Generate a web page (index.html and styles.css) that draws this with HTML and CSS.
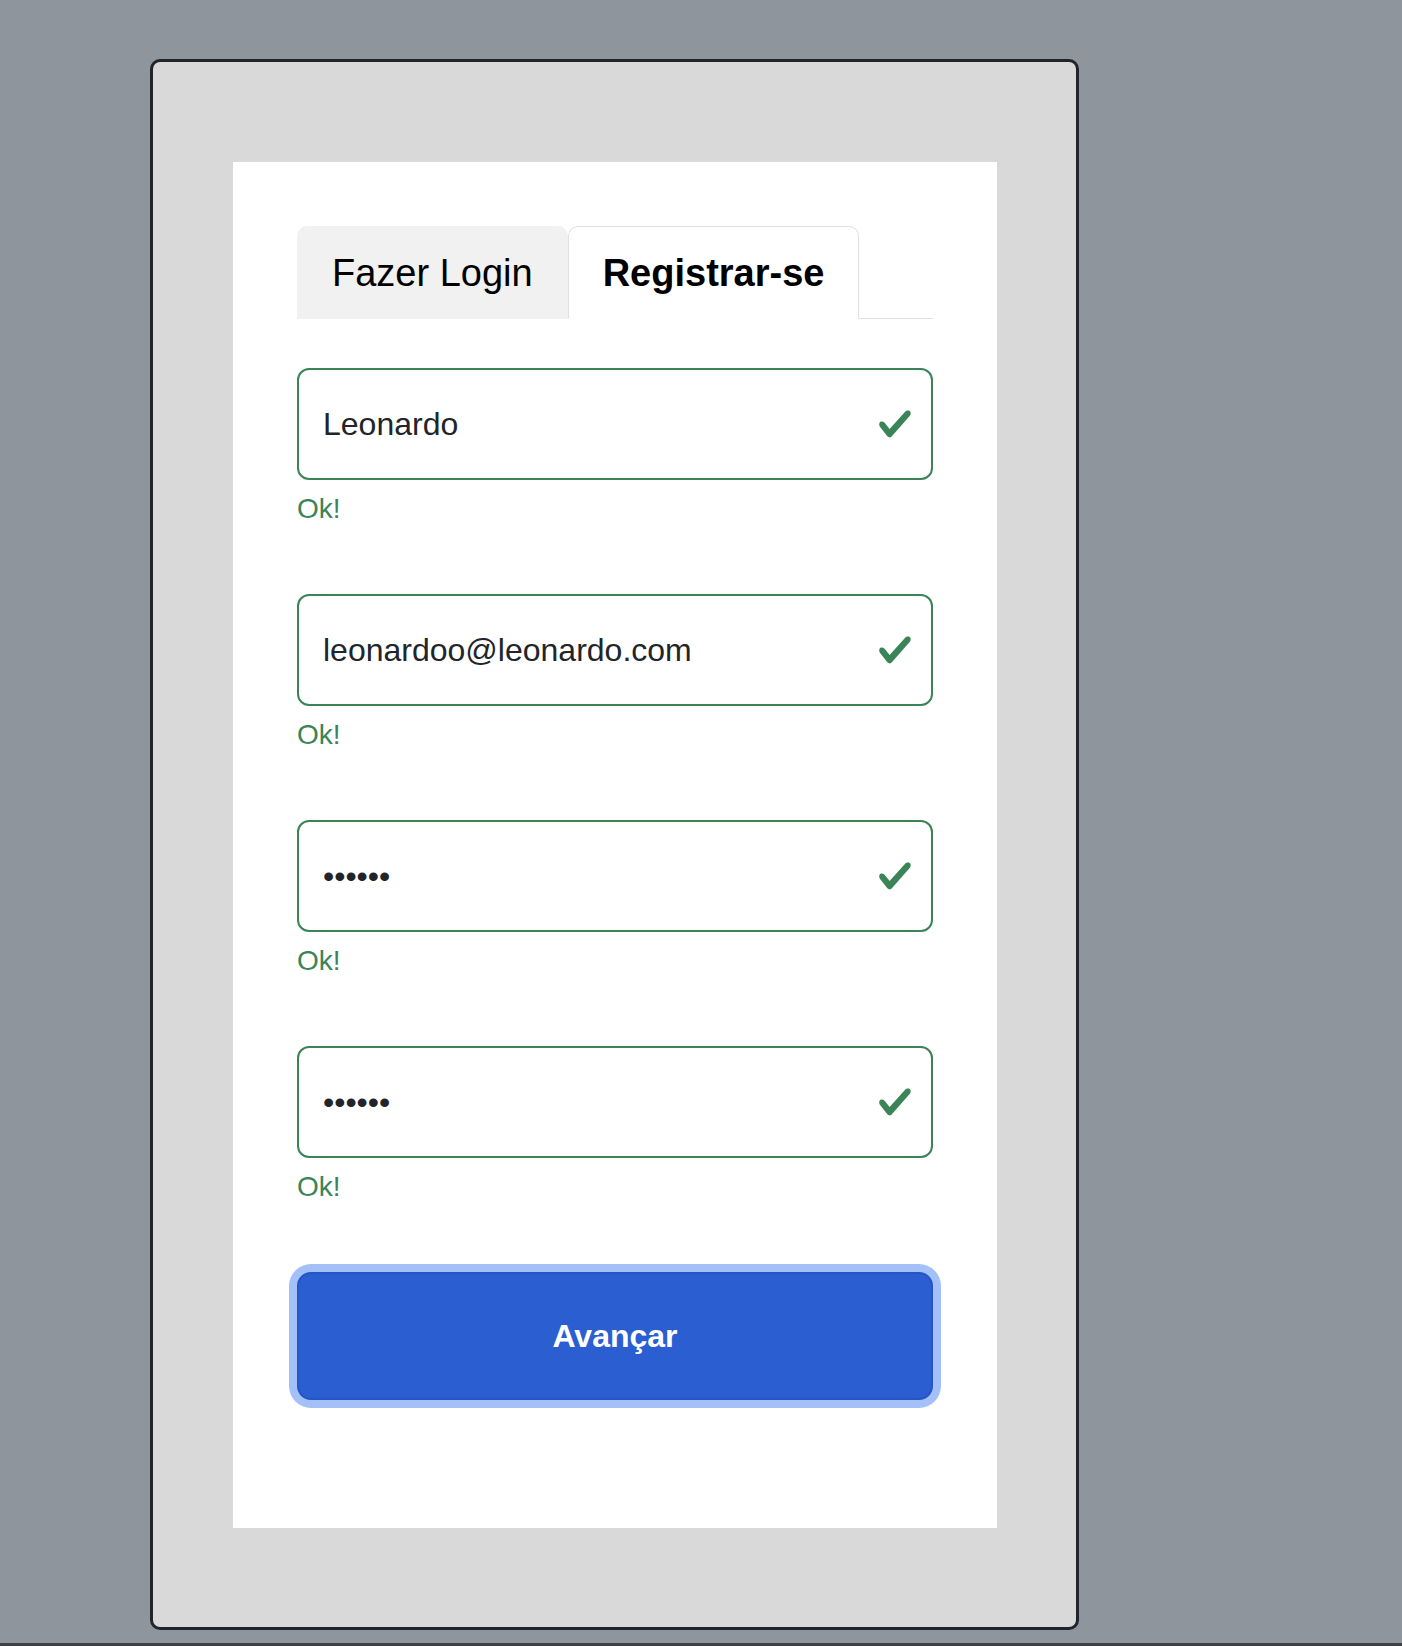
FILE: index.html
```html
<!DOCTYPE html>
<html lang="pt-BR">
<head>
<meta charset="utf-8">
<title>Registrar-se</title>
<link rel="stylesheet" href="styles.css">
</head>
<body>
  <div class="device">
    <div class="panel">
      <div class="tabs">
        <button class="tab" type="button">Fazer Login</button>
        <button class="tab active" type="button">Registrar-se</button>
      </div>
      <form class="form">
        <div class="group">
          <div class="field">
            <input class="control" type="text" value="Leonardo">
            <svg class="valid-icon" viewBox="0 0 8 8" aria-hidden="true"><path d="M2.3 6.73.6 4.53c-.4-1.04.46-1.4 1.1-.8l1.1 1.4 3.4-3.8c.6-.63 1.6-.27 1.2.7l-4 4.6c-.43.5-.8.4-1.1.1z"/></svg>
          </div>
          <div class="feedback">Ok!</div>
        </div>
        <div class="group">
          <div class="field">
            <input class="control" type="email" value="leonardoo@leonardo.com">
            <svg class="valid-icon" viewBox="0 0 8 8" aria-hidden="true"><path d="M2.3 6.73.6 4.53c-.4-1.04.46-1.4 1.1-.8l1.1 1.4 3.4-3.8c.6-.63 1.6-.27 1.2.7l-4 4.6c-.43.5-.8.4-1.1.1z"/></svg>
          </div>
          <div class="feedback">Ok!</div>
        </div>
        <div class="group">
          <div class="field">
            <input class="control" type="password" value="123456">
            <svg class="valid-icon" viewBox="0 0 8 8" aria-hidden="true"><path d="M2.3 6.73.6 4.53c-.4-1.04.46-1.4 1.1-.8l1.1 1.4 3.4-3.8c.6-.63 1.6-.27 1.2.7l-4 4.6c-.43.5-.8.4-1.1.1z"/></svg>
          </div>
          <div class="feedback">Ok!</div>
        </div>
        <div class="group">
          <div class="field">
            <input class="control" type="password" value="123456">
            <svg class="valid-icon" viewBox="0 0 8 8" aria-hidden="true"><path d="M2.3 6.73.6 4.53c-.4-1.04.46-1.4 1.1-.8l1.1 1.4 3.4-3.8c.6-.63 1.6-.27 1.2.7l-4 4.6c-.43.5-.8.4-1.1.1z"/></svg>
          </div>
          <div class="feedback">Ok!</div>
        </div>
        <button class="submit" type="button">Avançar</button>
      </form>
    </div>
  </div>
  <div class="bottom-edge"></div>
</body>
</html>
```

FILE: styles.css
```css
* {
  box-sizing: border-box;
}

html, body {
  margin: 0;
  padding: 0;
}

body {
  background: #8e959c;
  font-family: "Liberation Sans", Arial, Helvetica, sans-serif;
  height: 1646px;
  overflow: hidden;
}

.device {
  margin: 59px 0 0 150px;
  width: 929px;
  border: 3px solid #212529;
  border-radius: 10px;
  background: #d9d9d9;
  padding: 100px 79px 99px 80px;
}

.panel {
  background: #ffffff;
  width: 764px;
  padding: 64px 64px 128px 64px;
}

.tabs {
  display: flex;
  border-bottom: 1px solid #dee2e6;
  margin-bottom: 49px;
}

.tab {
  font-family: "Liberation Sans", Arial, Helvetica, sans-serif;
  font-size: 38px;
  line-height: 46px;
  color: #000;
  background: #f1f1f1;
  border: 1px solid transparent;
  border-radius: 10px 10px 0 0;
  padding: 23px 34px 22px 34px;
  margin-bottom: -1px;
  cursor: pointer;
}

.tab.active {
  background: #ffffff;
  font-weight: bold;
  border-color: #dee2e6 #dee2e6 #ffffff;
}

.form {
  display: flex;
  flex-direction: column;
}

.group {
  margin-bottom: 64px;
}

.field {
  position: relative;
}

.control {
  display: block;
  width: 100%;
  height: 112px;
  padding: 0 80px 0 24px;
  font-family: "Liberation Sans", Arial, Helvetica, sans-serif;
  font-size: 32px;
  color: #212529;
  background: #ffffff;
  border: 2px solid #3a8457;
  border-radius: 12px;
  outline: none;
}

.valid-icon {
  position: absolute;
  right: 20px;
  top: 50%;
  width: 36px;
  height: 36px;
  margin-top: -18px;
  fill: #3a8457;
}

.feedback {
  margin-top: 8px;
  font-size: 28px;
  line-height: 42px;
  color: #3a8457;
}

.submit {
  margin-top: 0;
  height: 128px;
  width: 100%;
  font-family: "Liberation Sans", Arial, Helvetica, sans-serif;
  font-size: 32px;
  font-weight: bold;
  color: #ffffff;
  background: #2b5ed1;
  border: 2px solid #2655c4;
  border-radius: 14px;
  box-shadow: 0 0 0 8px #a4c0f8;
  cursor: pointer;
}

.bottom-edge {
  margin-top: 13px;
  border-top: 3px solid #3d4044;
}
```
